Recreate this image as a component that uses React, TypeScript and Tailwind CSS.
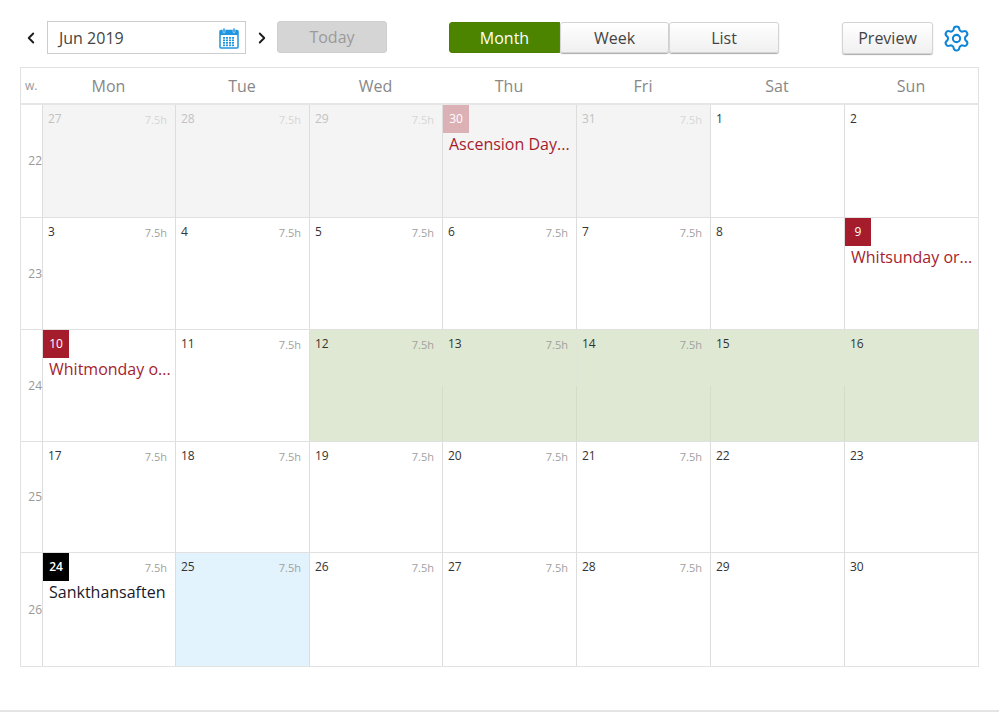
import React from "react";
import { ChevronLeft, ChevronRight, Settings } from "lucide-react";

type Day = {
  n: number;
  hours?: boolean;
  kind?: "muted" | "green" | "today";
  badge?: string;
  event?: string;
  eventColor?: string;
};

const days: Day[] = [
  { n: 27, hours: true, kind: "muted" },
  { n: 28, hours: true, kind: "muted" },
  { n: 29, hours: true, kind: "muted" },
  { n: 30, kind: "muted", badge: "bg-[#dcb1b6]", event: "Ascension Day...", eventColor: "text-[#a51d2d]" },
  { n: 31, hours: true, kind: "muted" },
  { n: 1 },
  { n: 2 },
  { n: 3, hours: true },
  { n: 4, hours: true },
  { n: 5, hours: true },
  { n: 6, hours: true },
  { n: 7, hours: true },
  { n: 8 },
  { n: 9, badge: "bg-[#a51d2d]", event: "Whitsunday or...", eventColor: "text-[#a51d2d]" },
  { n: 10, badge: "bg-[#a51d2d]", event: "Whitmonday o...", eventColor: "text-[#a51d2d]" },
  { n: 11, hours: true },
  { n: 12, hours: true, kind: "green" },
  { n: 13, hours: true, kind: "green" },
  { n: 14, hours: true, kind: "green" },
  { n: 15, kind: "green" },
  { n: 16, kind: "green" },
  { n: 17, hours: true },
  { n: 18, hours: true },
  { n: 19, hours: true },
  { n: 20, hours: true },
  { n: 21, hours: true },
  { n: 22 },
  { n: 23 },
  { n: 24, hours: true, badge: "bg-black", event: "Sankthansaften", eventColor: "text-[#1a1a2a]" },
  { n: 25, hours: true, kind: "today" },
  { n: 26, hours: true },
  { n: 27, hours: true },
  { n: 28, hours: true },
  { n: 29 },
  { n: 30 },
];

const weekDays = ["Mon", "Tue", "Wed", "Thu", "Fri", "Sat", "Sun"];
const weeks = [22, 23, 24, 25, 26];

function CalendarIcon() {
  return (
    <svg width="20" height="22" viewBox="0 0 20 22" fill="none">
      <rect x="1" y="3.5" width="18" height="17.5" rx="1" stroke="#1e95e0" strokeWidth="1.5" fill="#fff" />
      <rect x="1" y="3.5" width="18" height="4.5" fill="#1e95e0" />
      <rect x="4" y="1" width="2" height="5" rx="1" fill="#1e95e0" stroke="#fff" strokeWidth="0.5" />
      <rect x="14" y="1" width="2" height="5" rx="1" fill="#1e95e0" stroke="#fff" strokeWidth="0.5" />
      {[10.5, 13, 15.5, 18].map((y) =>
        [4, 7, 10, 13].map((x) => (
          <rect key={`${x}-${y}`} x={x} y={y - 0.5} width="2" height="1.7" fill="#1e95e0" />
        ))
      )}
    </svg>
  );
}

function DayCell({ day, index }: { day: Day; index: number }) {
  const bg =
    day.kind === "muted"
      ? "bg-[#f4f4f4]"
      : day.kind === "green"
      ? "bg-[#dfe8d3]"
      : day.kind === "today"
      ? "bg-[#e2f3fd]"
      : "bg-white";
  const lineColor = day.kind === "green" ? "border-[#e0e6d6]" : "border-[#dddddd]";
  const firstGreen = day.n === 12;

  return (
    <div className={`relative min-w-0 border-l ${firstGreen ? "border-[#dddddd]" : lineColor} ${bg}`}>
      {day.kind === "green" && !firstGreen && (
        <div className="absolute bottom-0 left-[-1px] h-1/2 w-px bg-[#d5dcc9]" />
      )}
      <div className="flex items-start justify-between">
        {day.badge ? (
          <div
            className={`flex h-[28px] w-[26px] items-center justify-center text-[12px] ${
              day.n === 24 ? "font-semibold" : ""
            } text-white ${day.badge}`}
          >
            {day.n}
          </div>
        ) : (
          <div
            className={`pl-[5px] pt-[6px] text-[12px] leading-[16px] ${
              day.kind === "muted" ? "text-[#c2c2c2]" : "text-[#333333]"
            }`}
          >
            {day.n}
          </div>
        )}
        {day.hours && (
          <div
            className={`pr-[8px] pt-[7px] text-[11px] leading-[16px] ${
              day.kind === "muted" ? "text-[#d6d6d6]" : "text-[#a0a0a0]"
            }`}
          >
            7.5h
          </div>
        )}
      </div>
      {day.event && (
        <div className={`truncate pl-[6px] pt-[1px] text-[16px] leading-[20px] ${day.eventColor}`}>{day.event}</div>
      )}
    </div>
  );
}

export default function App() {
  return (
    <div className="relative h-[712px] w-[999px] overflow-hidden bg-white font-['Open_Sans',sans-serif]">
      <div className="flex h-[67px] items-start pt-[21px] text-[16px]">
        <div className="flex w-[47px] justify-end pr-[7px] pt-[8px]">
          <ChevronLeft size={18} strokeWidth={2.5} className="text-[#1c1c1c]" />
        </div>
        <div className="flex h-[33px] w-[199px] items-center justify-between border border-[#cccccc] pl-[11px] pr-[6px] text-[#444444]">
          <span>Jun 2019</span>
          <CalendarIcon />
        </div>
        <div className="flex w-[31px] justify-center pt-[8px]">
          <ChevronRight size={18} strokeWidth={2.5} className="text-[#1c1c1c]" />
        </div>
        <button className="h-[32px] w-[110px] rounded-[3px] border border-[#cfcfcf] bg-[#d5d5d5] text-[#9a9a9a]">
          Today
        </button>
        <div className="ml-[62px] mt-[1px] flex">
          <button className="h-[31px] w-[111px] rounded-l-[3px] border border-[#4a7f00] bg-[#4c8400] text-white">
            Month
          </button>
          <button className="h-[31px] w-[109px] rounded-[3px] border border-[#d4d4d4] bg-gradient-to-b from-white to-[#f0f0f0] text-[#444444] shadow-[0_1px_1px_#aaaaaa]">
            Week
          </button>
          <button className="h-[31px] w-[110px] rounded-[3px] border border-[#d4d4d4] bg-gradient-to-b from-white to-[#f0f0f0] text-[#444444] shadow-[0_1px_1px_#aaaaaa]">
            List
          </button>
        </div>
        <button className="ml-[63px] mt-[1px] h-[32px] w-[91px] rounded-[3px] border border-[#d4d4d4] bg-gradient-to-b from-white to-[#f0f0f0] text-[#444444] shadow-[0_1px_1px_#aaaaaa]">
          Preview
        </button>
        <div className="ml-[9px] mt-[3px]">
          <Settings size={29} strokeWidth={1.7} className="text-[#0f85d8]" />
        </div>
      </div>

      <div className="ml-[20px] w-[959px] border border-[#e2e2e2]">
        <div className="grid h-[37px] grid-cols-[21px_133px_134px_133px_134px_134px_134px_134px] border-b-2 border-[#e6e6e6]">
          <div className="flex items-center pl-[4px] text-[12px] text-[#999999]">w.</div>
          {weekDays.map((d) => (
            <div key={d} className="flex items-center justify-center text-[16px] text-[#888888]">
              {d}
            </div>
          ))}
        </div>
        {weeks.map((week, w) => (
          <div
            key={week}
            className={`grid grid-cols-[21px_133px_134px_133px_134px_134px_134px_134px] ${
              w === 4 ? "h-[114px]" : w === 3 ? "h-[111px]" : "h-[112px]"
            } ${w > 0 ? "border-t-[1px] border-[#e0e0e0]" : ""}`}
          >
            <div className="flex items-center justify-end text-[12px] text-[#999999]">{week}</div>
            {days.slice(w * 7, w * 7 + 7).map((day, i) => (
              <DayCell key={`${week}-${i}`} day={day} index={i} />
            ))}
          </div>
        ))}
      </div>

      <div className="absolute bottom-0 left-0 h-[2px] w-full bg-[#e4e4e4]" />
    </div>
  );
}
